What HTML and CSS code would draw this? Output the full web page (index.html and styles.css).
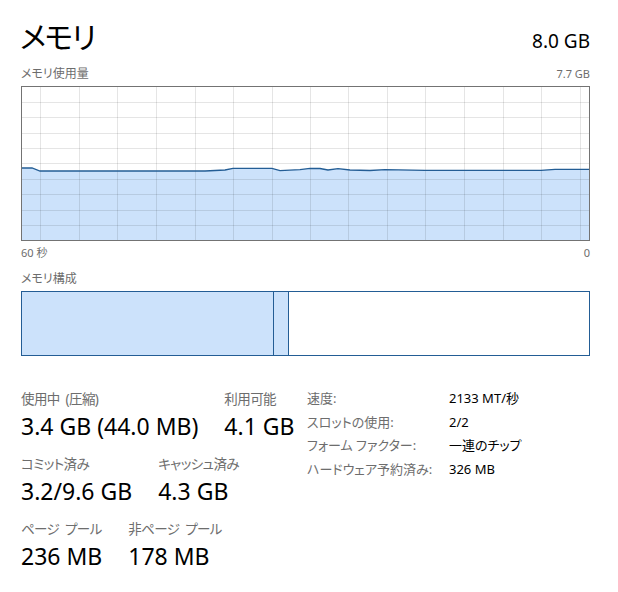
FILE: index.html
```html
<!DOCTYPE html>
<html lang="ja">
    <head>
        <meta charset="utf-8">
        <title>メモリ</title>
        <link rel="stylesheet" href="styles.css">
    </head>
    <body>
        <div class="panel">
            <div class="head">
                <h1 class="title">メモリ</h1>
                <span class="total">8.0 GB</span>
            </div>

            <div class="caption">
                <span>メモリ使用量</span>
                <span class="num">7.7 GB</span>
            </div>
            <!-- 使用量グラフ -->
            <div class="graph">
                <svg width="567" height="153" viewBox="0 0 567 153">
                    <polygon class="area" points="0,81 10,81 18,84 183,84 203,83 211,81.3 250,81.3 258,83.7 278,82.7 288,81.3 298,81.5 306,83 316,81.7 328,83 348,83.5 363,82.6 403,83.3 519,83.3 533,82.3 567,82.3 567,153 0,153"/>
                    <g class="grid">
                        <line x1="0" y1="15.5" x2="567" y2="15.5"/>
                        <line x1="0" y1="30.5" x2="567" y2="30.5"/>
                        <line x1="0" y1="46.5" x2="567" y2="46.5"/>
                        <line x1="0" y1="61.5" x2="567" y2="61.5"/>
                        <line x1="0" y1="76.5" x2="567" y2="76.5"/>
                        <line x1="0" y1="92.5" x2="567" y2="92.5"/>
                        <line x1="0" y1="107.5" x2="567" y2="107.5"/>
                        <line x1="0" y1="123.5" x2="567" y2="123.5"/>
                        <line x1="0" y1="138.5" x2="567" y2="138.5"/>
                        <line x1="18.5" y1="0" x2="18.5" y2="153"/>
                        <line x1="57.5" y1="0" x2="57.5" y2="153"/>
                        <line x1="95.5" y1="0" x2="95.5" y2="153"/>
                        <line x1="134.5" y1="0" x2="134.5" y2="153"/>
                        <line x1="173.5" y1="0" x2="173.5" y2="153"/>
                        <line x1="211.5" y1="0" x2="211.5" y2="153"/>
                        <line x1="250.5" y1="0" x2="250.5" y2="153"/>
                        <line x1="288.5" y1="0" x2="288.5" y2="153"/>
                        <line x1="326.5" y1="0" x2="326.5" y2="153"/>
                        <line x1="365.5" y1="0" x2="365.5" y2="153"/>
                        <line x1="403.5" y1="0" x2="403.5" y2="153"/>
                        <line x1="442.5" y1="0" x2="442.5" y2="153"/>
                        <line x1="481.5" y1="0" x2="481.5" y2="153"/>
                        <line x1="519.5" y1="0" x2="519.5" y2="153"/>
                        <line x1="558.5" y1="0" x2="558.5" y2="153"/>
                    </g>
                    <polyline class="line" points="0,81 10,81 18,84 183,84 203,83 211,81.3 250,81.3 258,83.7 278,82.7 288,81.3 298,81.5 306,83 316,81.7 328,83 348,83.5 363,82.6 403,83.3 519,83.3 533,82.3 567,82.3"/>
                </svg>
            </div>
            <div class="caption axis">
                <span class="num">60 秒</span>
                <span class="num">0</span>
            </div>

            <div class="caption">
                <span>メモリ構成</span>
            </div>
            <!-- メモリ構成バー -->
            <div class="compose">
                <div class="seg used" style="width:251px"></div>
                <div class="seg modified" style="width:14px"></div>
                <div class="seg free"></div>
            </div>

            <div class="stats">
                <div class="main">
                    <div class="row">
                        <div class="item">
                            <div class="label">使用中 (圧縮)</div>
                            <div class="value">3.4 GB (44.0 MB)</div>
                        </div>
                        <div class="item">
                            <div class="label">利用可能</div>
                            <div class="value">4.1 GB</div>
                        </div>
                    </div>
                    <div class="row">
                        <div class="item">
                            <div class="label">コミット済み</div>
                            <div class="value">3.2/9.6 GB</div>
                        </div>
                        <div class="item">
                            <div class="label">キャッシュ済み</div>
                            <div class="value">4.3 GB</div>
                        </div>
                    </div>
                    <div class="row">
                        <div class="item">
                            <div class="label">ページ プール</div>
                            <div class="value">236 MB</div>
                        </div>
                        <div class="item">
                            <div class="label">非ページ プール</div>
                            <div class="value">178 MB</div>
                        </div>
                    </div>
                </div>
                <dl class="details">
                    <dt>速度:</dt><dd>2133 MT/秒</dd>
                    <dt>スロットの使用:</dt><dd>2/2</dd>
                    <dt>フォーム ファクター:</dt><dd>一連のチップ</dd>
                    <dt>ハードウェア予約済み:</dt><dd>326 MB</dd>
                </dl>
            </div>
        </div>
    </body>
</html>
```

FILE: styles.css
```css
/* タスクマネージャー メモリ画面 */
body{
    margin: 0;
    background: #fff;
    font-family: "Noto Sans", "Noto Sans CJK JP", sans-serif;
    font-feature-settings: "palt";
    color: #000;
}
.panel{
    padding: 17px 28px 0 21px;
}

/* 見出し */
.head{
    display: flex;
    justify-content: space-between;
    align-items: baseline;
    margin-bottom: 8px;
}
.title{
    margin: 0 0 0 -1px;
    font-size: 30px;
    font-weight: normal;
    line-height: 40px;
    letter-spacing: -1.5px;
}
.total{
    font-size: 19px;
}

/* 小さい説明文字 */
.caption{
    display: flex;
    justify-content: space-between;
    font-size: 12px;
    line-height: 18px;
    color: #6d6d6d;
}
.caption .num{
    font-size: 11px;
}
.axis{
    margin: 3px 0 8px;
}

/* グラフ */
.graph{
    width: 567px;
    height: 153px;
    border: 1px solid #737373;
    margin-top: 3px;
}
.graph svg{
    display: block;
}
.area{
    fill: #cce2fb;
}
.grid line{
    stroke: rgba(0, 0, 0, 0.1);
    stroke-width: 1;
}
.line{
    fill: none;
    stroke: #235d95;
    stroke-width: 1.3;
}

/* 構成バー */
.compose{
    display: flex;
    width: 567px;
    height: 63px;
    border: 1px solid #235d95;
    margin-top: 3px;
}
.seg{
    height: 100%;
}
.used,
.modified{
    background: #cce2fb;
    border-right: 1px solid #235d95;
}
.free{
    flex: 1;
}

/* 数値 */
.stats{
    display: flex;
    align-items: flex-start;
    margin-top: 33px;
}
.main{
    width: 286px;
}
.row{
    display: flex;
    gap: 26px;
    margin-bottom: 12px;
}
.label{
    font-size: 13.5px;
    line-height: 20px;
    letter-spacing: -0.6px;
    word-spacing: 3px;
    white-space: nowrap;
    color: #6d6d6d;
}
.value{
    font-size: 23px;
    line-height: 32px;
    margin-top: 1px;
}

.details{
    display: grid;
    grid-template-columns: 142px auto;
    align-content: start;
    margin: -2px 0 0;
    font-size: 13px;
    line-height: 23.5px;
}
.details dt{
    color: #6d6d6d;
}
.details dd{
    margin: 0;
}
```
